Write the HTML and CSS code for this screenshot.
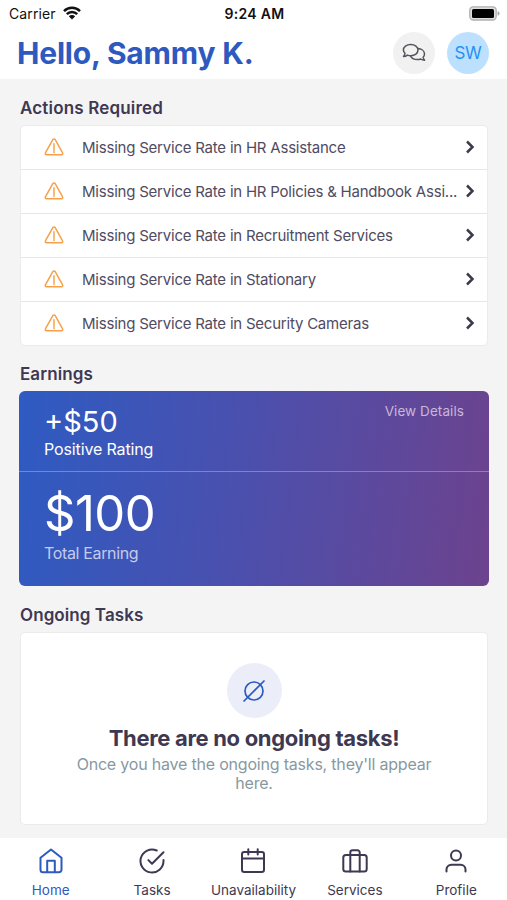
FILE: index.html
```html
<!DOCTYPE html>
<html lang="en">
<head>
<meta charset="utf-8">
<title>Home</title>
<link rel="stylesheet" href="styles.css">
</head>
<body>
<svg class="defs" aria-hidden="true">
  <symbol id="warn" viewBox="0 0 20 18"><path d="M8.8 1.7a1.4 1.4 0 0 1 2.4 0l7.4 13.1a1.3 1.3 0 0 1-1.2 2H2.6a1.3 1.3 0 0 1-1.2-2z"/><path d="M10 5.8v6.7M10 13.4v1.1"/></symbol>
  <symbol id="chev" viewBox="0 0 10 14"><path d="M2 1.500L7.500 7 2 12.500"/></symbol>
</svg>
<div class="app">
  <header class="top">
    <div class="status">
      <div class="carrier"><span>Carrier</span>
        <svg class="wifi" viewBox="0 0 18 14"><path d="M1 5.100a11.400 11.400 0 0 1 16 0M3.800 8.200a7.300 7.300 0 0 1 10.400 0"/><path class="solid" d="M9 13.500L5.800 10.300a4.600 4.600 0 0 1 6.400 0z"/></svg>
      </div>
      <div class="time">9:24 AM</div>
      <div class="power"><svg class="battery" viewBox="0 0 31 15"><rect class="shell" x=".8" y=".8" width="26.4" height="13.2" rx="3.5"/><rect x="3" y="3" width="22" height="9" rx="1.5"/><path class="tip" d="M28.6 5q2 .6 2 2.4t-2 2.4z"/></svg></div>
    </div>
    <div class="greeting">
      <h1>Hello, Sammy K.</h1>
      <div class="circle chat"><svg viewBox="0 0 24 20"><path d="M8.7 1.5c4.2 0 7.3 2.4 7.3 5.6s-3.1 5.6-7.3 5.6c-1.2 0-2.3-.2-3.300-.6C4.300 13 2.800 13.500 1.500 13.500c.8-.9 1.300-2 1.500-3.200A5 5 0 0 1 1.400 7.100c0-3.200 3.100-5.600 7.300-5.600z"/><path d="M15.800 5.600c3.900.2 6.700 2.500 6.700 5.400 0 1.200-.5 2.300-1.400 3.200.2 1.200.7 2.200 1.500 3.100-1.400 0-2.800-.5-3.900-1.300-1 .4-2.100.6-3.300.6-3.300 0-6-1.500-6.900-3.900"/></svg></div>
      <div class="circle avatar">SW</div>
    </div>
  </header>
  <main>
    <h2>Actions Required</h2>
    <ul class="card actions">
      <li><svg class="warn"><use href="#warn"/></svg><span>Missing Service Rate in HR Assistance</span><svg class="chev"><use href="#chev"/></svg></li>
      <li><svg class="warn"><use href="#warn"/></svg><span>Missing Service Rate in HR Policies &amp; Handbook Assi...</span><svg class="chev"><use href="#chev"/></svg></li>
      <li><svg class="warn"><use href="#warn"/></svg><span>Missing Service Rate in Recruitment Services</span><svg class="chev"><use href="#chev"/></svg></li>
      <li><svg class="warn"><use href="#warn"/></svg><span>Missing Service Rate in Stationary</span><svg class="chev"><use href="#chev"/></svg></li>
      <li><svg class="warn"><use href="#warn"/></svg><span>Missing Service Rate in Security Cameras</span><svg class="chev"><use href="#chev"/></svg></li>
    </ul>
    <h2 class="tight">Earnings</h2>
    <section class="earnings">
      <div class="rating"><div><p class="bonus">+$50</p><p class="label">Positive Rating</p></div><a class="details">View Details</a></div>
      <div class="total"><p class="amount">$100</p><p class="label dim">Total Earning</p></div>
    </section>
    <h2 class="tight">Ongoing Tasks</h2>
    <section class="card empty">
      <div class="badge"><svg viewBox="0 0 22 22"><circle cx="11" cy="11" r="9"/><path d="M1 21L21 1"/></svg></div>
      <h3>There are no ongoing tasks!</h3>
      <p>Once you have the ongoing tasks, they'll appear here.</p>
    </section>
  </main>
  <nav>
    <a class="active"><svg viewBox="0 0 26 26"><path d="M2.500 9.700L13 1.500l10.500 8.200v12a2.500 2.500 0 0 1-2.500 2.500H5a2.500 2.500 0 0 1-2.500-2.500z"/><path d="M9.200 24V12.700h7.600V24"/></svg><span>Home</span></a>
    <a><svg viewBox="0 0 26 26"><path d="M24.500 11.900V13A11.500 11.500 0 1 1 17.700 2.500"/><path d="M24.500 4.200L13 15.700l-3.600-3.600"/></svg><span>Tasks</span></a>
    <a><svg viewBox="0 0 26 26"><rect x="2" y="4" width="22" height="20" rx="2.300"/><path d="M2 10.500h22M8.300 1.300v5.200M17.700 1.300v5.200"/></svg><span>Unavailability</span></a>
    <a><svg viewBox="0 0 26 26"><rect x="1.300" y="7" width="23.400" height="16.500" rx="2.500"/><path d="M8.300 23.500V4.500a2.300 2.300 0 0 1 2.300-2.300h4.800a2.300 2.300 0 0 1 2.300 2.300v19"/></svg><span>Services</span></a>
    <a><svg viewBox="0 0 26 26"><circle cx="13" cy="7.500" r="5"/><path d="M3.500 23.500v-2a4.800 4.800 0 0 1 4.800-4.800h9.400a4.800 4.800 0 0 1 4.800 4.800v2"/></svg><span>Profile</span></a>
  </nav>
</div>
</body>
</html>
```
FILE: styles.css
```css
* { box-sizing: border-box; margin: 0; padding: 0; }
body { font-family: Inter, "Liberation Sans", sans-serif; color: #3e3852; background: #f4f4f4; }
svg { display: block; flex: none; fill: none; stroke: currentColor; stroke-linecap: round; stroke-linejoin: round; }
.defs { width: 0; height: 0; position: absolute; }
.app { width: 507px; height: 900px; display: flex; flex-direction: column; overflow: hidden; }
.top { height: 79px; background: #fff; }
.status { height: 26px; display: grid; grid-template-columns: 1fr auto 1fr; align-items: center; padding: 0 7px 0 9px; color: #111; font-size: 14px; }
.carrier { display: flex; gap: 7px; align-items: center; letter-spacing: .1px; }
.wifi { width: 18px; height: 14px; stroke-width: 2.500; stroke-linecap: butt; }
.wifi .solid { fill: currentColor; stroke: none; }
.time { font-weight: 600; letter-spacing: .3px; }
.power { display: flex; justify-content: flex-end; }
.battery { width: 31px; height: 15px; fill: #000; stroke: none; }
.battery .shell { fill: #dedede; stroke: #b0b0b0; stroke-width: 1.300; }
.battery .tip { fill: #a8a8a8; }
.greeting { height: 53px; display: flex; align-items: center; padding: 0 18px 0 17px; gap: 12px; }
h1 { flex: 1; font-size: 30px; line-height: 36px; letter-spacing: -.18px; color: #2e59bf; font-weight: 700; white-space: nowrap; }
.circle { width: 42px; height: 42px; border-radius: 50%; display: flex; align-items: center; justify-content: center; }
.chat { background: #f1f1f2; color: #55555f; }
.chat svg { width: 24px; height: 20px; stroke-width: 1.500; }
.avatar { background: #bde0fe; color: #2492f5; font-size: 17px; letter-spacing: -.4px; }
main { flex: 1; padding: 18px 19px 0 20px; }
h2 { font-size: 17px; line-height: 22px; height: 28px; font-weight: 600; letter-spacing: .17px; }
h2.tight { height: 27px; line-height: 20px; letter-spacing: .08px; }
.card { background: #fff; border-radius: 5px; border: 1px solid #ebebed; }
.actions { list-style: none; height: 221px; margin-bottom: 18px; letter-spacing: -.22px; }
.actions li { height: 44px; display: flex; align-items: center; padding: 0 12px 0 23px; font-size: 15px; line-height: 18px; border-bottom: 1px solid #e6e6e8; }
.actions li:last-child { height: 43px; border: 0; }
.actions span { flex: 1; white-space: nowrap; color: #514b61; }
.warn { width: 20px; height: 18px; margin: -1px 18px 0 0; color: #f6a14a; stroke-width: 1.500; }
.chev { width: 10px; height: 14px; margin-top: -1px; color: #3e3a4b; stroke-width: 2.500; stroke-linecap: butt; stroke-linejoin: miter; }
.earnings { height: 195px; margin: 0 -1px 19px -1px; border-radius: 6px; color: #fff; background: linear-gradient(97deg, #2e5bc2 0%, #4a50ae 46%, #6b438f 98%); }
.rating { height: 81px; display: flex; justify-content: space-between; padding: 14px 25px 0 25px; border-bottom: 1px solid #8283c4; }
.bonus { font-size: 29px; line-height: 34px; }
.label { font-size: 16px; line-height: 21px; letter-spacing: -.13px; }
.details { font-size: 13.500px; line-height: 13px; letter-spacing: .08px; color: #c8b7d7; }
.total { padding: 13px 25px; }
.amount { font-size: 49px; line-height: 58px; letter-spacing: -.5px; }
.dim { color: #c4cbec; letter-spacing: -.35px; }
.empty { height: 193px; display: flex; flex-direction: column; align-items: center; padding-top: 30px; text-align: center; }
.badge { width: 55px; height: 55px; border-radius: 50%; background: #ebeef9; color: #2e59bf; display: flex; align-items: center; justify-content: center; }
.badge svg { width: 22px; height: 22px; stroke-width: 1.700; }
h3 { margin-top: 5px; font-size: 22px; line-height: 30px; letter-spacing: -.32px; font-weight: 700; white-space: nowrap; }
.empty p { width: 380px; margin-top: 2px; font-size: 16px; line-height: 19px; letter-spacing: -.2px; color: #87999f; }
nav { height: 62px; background: #fff; display: grid; grid-template-columns: repeat(5, 1fr); }
nav a { display: flex; flex-direction: column; align-items: center; padding-top: 10px; font-size: 13.500px; gap: 8px; line-height: 16px; }
nav svg { width: 26px; height: 26px; stroke-width: 2; }
nav .active { color: #2e59bf; }
```
